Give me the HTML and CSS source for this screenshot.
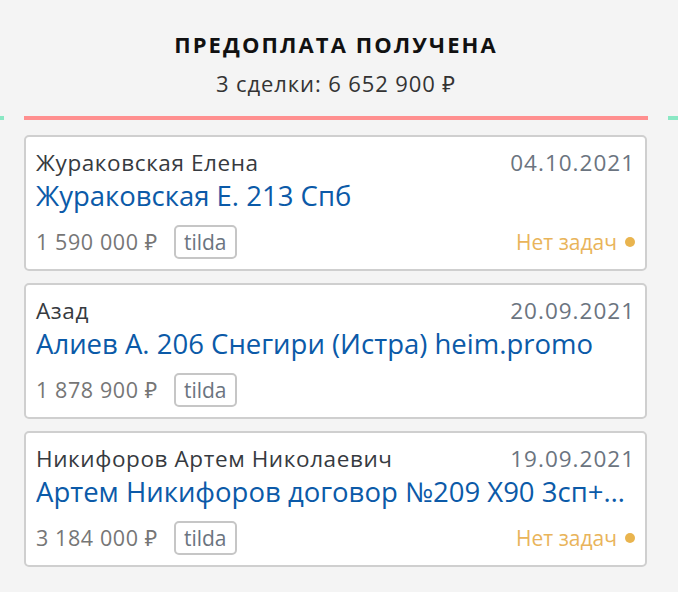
FILE: index.html
```html
<!DOCTYPE html>
<html lang="ru">
<head>
<meta charset="utf-8">
<link rel="stylesheet" href="styles.css">
</head>
<body>
<div class="board">
  <div class="side-line left"></div>
  <section class="column">
    <header class="column-head">
      <h2 class="column-title">ПРЕДОПЛАТА ПОЛУЧЕНА</h2>
      <div class="column-sum">3 сделки: 6 652 900 ₽</div>
      <div class="column-line"></div>
    </header>
    <div class="cards">
      <article class="card">
        <div class="row">
          <span class="contact">Жураковская Елена</span>
          <span class="date">04.10.2021</span>
        </div>
        <div class="lead">Жураковская Е. 213 Спб</div>
        <div class="row bottom">
          <div class="meta">
            <span class="price">1 590 000 ₽</span>
            <span class="tag">tilda</span>
          </div>
          <span class="tasks">Нет задач<span class="dot"></span></span>
        </div>
      </article>
      <article class="card">
        <div class="row">
          <span class="contact">Азад</span>
          <span class="date">20.09.2021</span>
        </div>
        <div class="lead">Алиев А. 206 Снегири (Истра) heim.promo</div>
        <div class="row bottom">
          <div class="meta">
            <span class="price">1 878 900 ₽</span>
            <span class="tag">tilda</span>
          </div>
        </div>
      </article>
      <article class="card">
        <div class="row">
          <span class="contact">Никифоров Артем Николаевич</span>
          <span class="date">19.09.2021</span>
        </div>
        <div class="lead">Артем Никифоров договор №209 Х90 3сп+ЧР+антресоль</div>
        <div class="row bottom">
          <div class="meta">
            <span class="price">3 184 000 ₽</span>
            <span class="tag">tilda</span>
          </div>
          <span class="tasks">Нет задач<span class="dot"></span></span>
        </div>
      </article>
    </div>
  </section>
  <div class="side-line right"></div>
</div>
</body>
</html>
```

FILE: styles.css
```css
html, body {
  margin: 0;
  padding: 0;
  background: #f4f4f4;
}
body {
  font-family: "Open Sans", "Noto Sans", sans-serif;
  width: 678px;
  height: 592px;
  overflow: hidden;
}
.board {
  display: grid;
  grid-template-columns: 4px 624px 30px;
  column-gap: 20px;
}
.side-line {
  margin-top: 116px;
  height: 4px;
  background: #8ae8c4;
}
.column-head {
  text-align: center;
  padding-top: 31px;
}
.column-title {
  margin: 0;
  font-size: 22px;
  line-height: 26px;
  font-weight: 700;
  letter-spacing: 2.1px;
  color: #111;
}
.column-sum {
  margin-top: 13px;
  font-size: 22px;
  line-height: 26px;
  letter-spacing: 0.9px;
  color: #333;
}
.column-line {
  margin-top: 20px;
  height: 4px;
  background: #ff8f8f;
}
.cards {
  display: flex;
  flex-direction: column;
  gap: 12px;
  margin-top: 15px;
}
.card {
  box-sizing: border-box;
  height: 136px;
  width: 623px;
  background: #fff;
  border: 2px solid #cfcfcf;
  border-radius: 5px;
  padding: 12px 10px 0 10px;
  display: flex;
  flex-direction: column;
}
.row {
  display: flex;
  justify-content: space-between;
  align-items: center;
}
.contact {
  font-size: 22.5px;
  line-height: 28px;
  letter-spacing: 0.6px;
  color: #363a40;
  white-space: nowrap;
}
.date {
  font-size: 22.5px;
  line-height: 28px;
  letter-spacing: 1px;
  color: #6b7480;
}
.lead {
  font-size: 27.5px;
  line-height: 38px;
  color: #0b5aa8;
  white-space: nowrap;
  overflow: hidden;
  text-overflow: ellipsis;
}
.bottom {
  margin-top: 10px;
}
.meta {
  display: flex;
  align-items: center;
  gap: 16px;
}
.price {
  font-size: 21.5px;
  line-height: 28px;
  letter-spacing: 0.6px;
  color: #767676;
}
.tag {
  box-sizing: border-box;
  height: 34px;
  padding: 0 8px;
  border: 2px solid #c6c6c6;
  border-radius: 5px;
  font-size: 21px;
  line-height: 30px;
  color: #6b7480;
}
.tasks {
  display: flex;
  align-items: center;
  gap: 8px;
  font-size: 21px;
  line-height: 28px;
  color: #e9b45a;
}
.dot {
  width: 10px;
  height: 10px;
  border-radius: 50%;
  background: #e9b44e;
}
```
